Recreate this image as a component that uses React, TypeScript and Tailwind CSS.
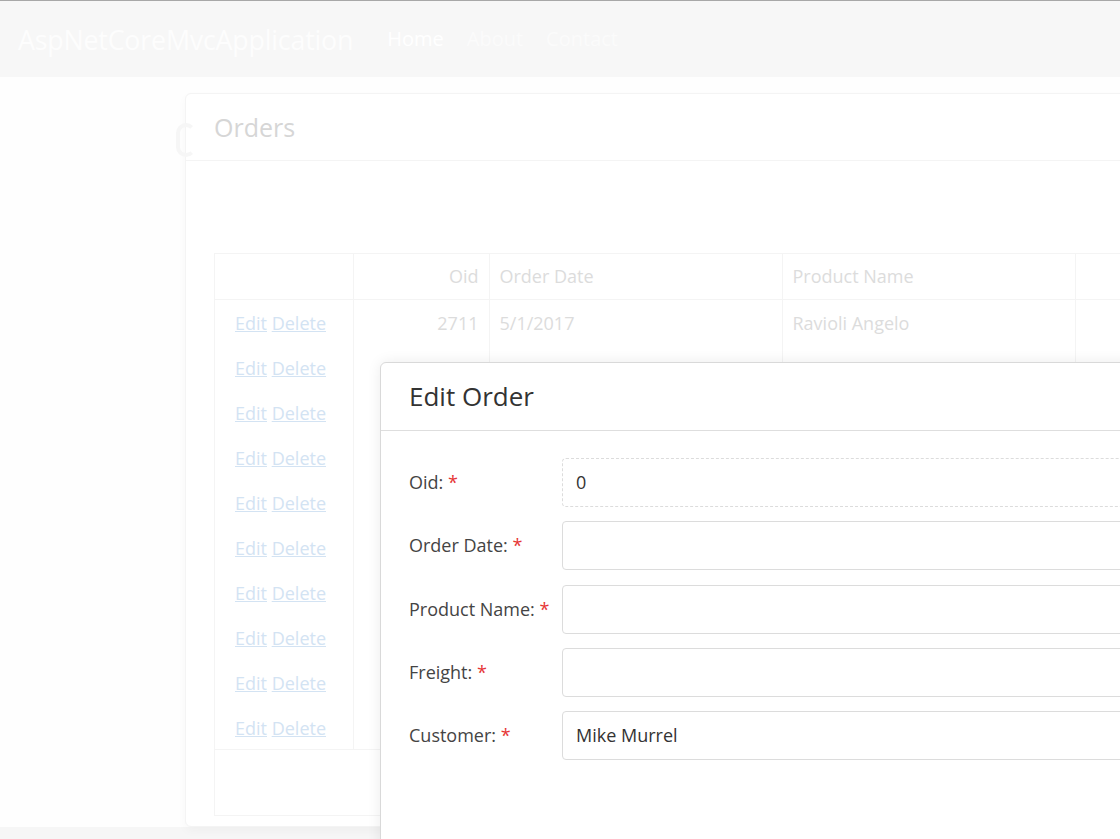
import React from "react";

const rows = Array.from({ length: 10 }, (_, i) => i);

const fields = [
  { label: "Oid:", value: "0", readOnly: true },
  { label: "Order Date:", value: "" },
  { label: "Product Name:", value: "" },
  { label: "Freight:", value: "" },
  { label: "Customer:", value: "Mike Murrel" },
];

function Navbar() {
  return (
    <nav className="h-[77px] bg-[#f7f7f7] border-t border-[#a8a8a8] flex items-center pl-[18px]">
      <span className="text-[26.8px] text-[#fdfdfd] tracking-[-0.2px] mt-[2px]">AspNetCoreMvcApplication</span>
      <ul className="flex ml-[34px] gap-[23px] text-[20px]">
        <li className="text-white">Home</li>
        <li className="text-[#fbfbfb]">About</li>
        <li className="text-[#fbfbfb]">Contact</li>
      </ul>
    </nav>
  );
}

function OrdersCard() {
  return (
    <div className="w-[1000px] h-[734px] bg-white border border-[#f4f4f4] rounded-[6px] shadow-[0_4px_10px_rgba(0,0,0,0.03)]">
      <div className="h-[67px] border-b border-[#f4f4f4] flex items-center px-[28px]">
        <h2 className="text-[25px] text-[#d6d6d6] mt-[2px]">Orders</h2>
      </div>
      <div className="px-[28px] pt-[92px]">
        <div className="border border-[#f4f4f4]">
          <table className="border-collapse text-[18px] text-[#dcdcdc] w-[1000px] table-fixed">
            <colgroup>
              <col className="w-[138px]" />
              <col className="w-[136px]" />
              <col className="w-[293px]" />
              <col className="w-[293px]" />
              <col />
            </colgroup>
            <thead>
              <tr className="h-[45px] border-b border-[#f4f4f4]">
                <th className="border-r border-[#f4f4f4]"></th>
                <th className="border-r border-[#f4f4f4] text-right font-normal px-[10px]">Oid</th>
                <th className="border-r border-[#f4f4f4] text-left font-normal px-[10px]">Order Date</th>
                <th className="border-r border-[#f4f4f4] text-left font-normal px-[10px]">Product Name</th>
                <th></th>
              </tr>
            </thead>
            <tbody>
              {rows.map((i) => (
                <tr key={i} className="h-[45px]">
                  <td className="border-r border-[#f4f4f4] px-[20px] pt-[3px]">
                    <span className="underline text-[#d3e3f3]">Edit</span>{" "}
                    <span className="underline text-[#d3e3f3]">Delete</span>
                  </td>
                  <td className="border-r border-[#f4f4f4] text-right px-[10px] pt-[3px]">{i === 0 ? "2711" : ""}</td>
                  <td className="border-r border-[#f4f4f4] px-[10px] pt-[3px]">{i === 0 ? "5/1/2017" : ""}</td>
                  <td className="border-r border-[#f4f4f4] px-[10px] pt-[3px]">{i === 0 ? "Ravioli Angelo" : ""}</td>
                  <td></td>
                </tr>
              ))}
            </tbody>
          </table>
          <div className="h-[66px] border-t border-[#f4f4f4]"></div>
        </div>
      </div>
    </div>
  );
}

function EditOrderModal() {
  return (
    <div className="absolute left-[380px] top-[362px] w-[900px] h-[520px] bg-white border border-[#d9d9d9] rounded-tl-[6px] shadow-[0_0_14px_rgba(0,0,0,0.08)]">
      <div className="h-[68px] border-b border-[#dedede] flex items-center px-[28px]">
        <h3 className="text-[26px] text-[#333]">Edit Order</h3>
      </div>
      <div className="pl-[28px] pt-[27px] flex flex-col gap-[14.3px]">
        {fields.map((f) => (
          <div key={f.label} className="flex items-center">
            <label className="w-[153px] text-[18px] text-[#444]">
              {f.label} <span className="text-[#e63535]">*</span>
            </label>
            <div
              className={
                "flex-1 h-[49px] rounded-[4px] flex items-center px-[13px] text-[18px] text-[#333] " +
                (f.readOnly ? "border border-dashed border-[#dcdcdc]" : "border border-[#dcdcdc]")
              }
            >
              {f.value}
            </div>
          </div>
        ))}
      </div>
    </div>
  );
}

export default function App() {
  return (
    <div className="relative w-[1120px] h-[839px] overflow-hidden bg-[#fefefe] font-['Open_Sans',sans-serif]">
      <Navbar />
      <div className="relative pl-[185px] pt-[16px]">
        <div className="absolute left-[176px] top-[46px] w-[20px] h-[34px] rounded-full border-[4px] border-[#f6f6f6] border-r-transparent"></div>
        <OrdersCard />
      </div>
      <div className="h-[20px] bg-[#f6f6f6]"></div>
      <EditOrderModal />
    </div>
  );
}
